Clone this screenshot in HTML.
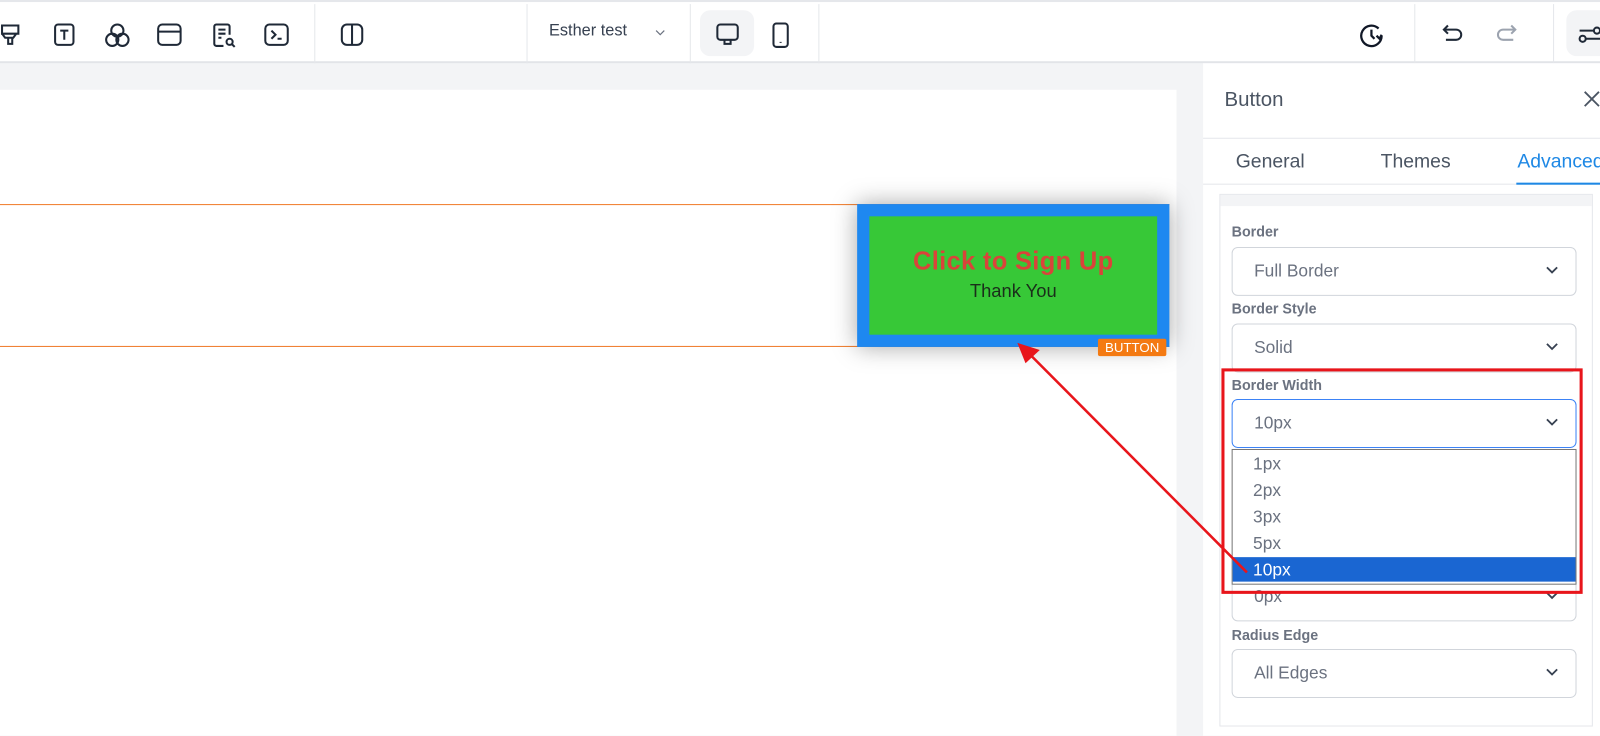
<!DOCTYPE html>
<html><head><meta charset="utf-8"><style>
*{box-sizing:border-box;margin:0;padding:0}
html,body{width:1600px;height:736px;overflow:hidden;background:#f3f4f6}
#w{position:absolute;left:0;top:0;width:1568px;height:721px;transform:scale(1.020408);transform-origin:0 0;overflow:hidden;font-family:"Liberation Sans",sans-serif;background:#f3f4f6}
.a{position:absolute}
.top{left:0;top:0;width:1568px;height:62px;background:#fff;border-top:2px solid #e5e7eb;border-bottom:2px solid #e2e4e8}
.vd{position:absolute;top:2px;width:1px;height:58px;background:#e5e7eb}
.ic{position:absolute;top:20px}
.lbl{position:absolute;left:1207px;font-size:14px;color:#6b7280;font-weight:bold}
.sel{position:absolute;left:1207px;width:338px;height:48px;border:1px solid #d1d5db;border-radius:6px;background:#fff;font-size:17px;color:#6b7280;padding-left:21px;line-height:46px}
.chev{position:absolute;right:16px;top:17px}
.opt{position:absolute;left:1228px;font-size:17px;color:#6b7280}
</style></head><body><div id="w">
<div class="a top">
<svg class="ic" style="left:0" width="22" height="24" viewBox="0 0 22 24" fill="none" stroke="#1f2937" stroke-width="2"><path d="M2 3h16v8H2zM2 11l3 4h8l3-4M8 15v6h4v-6"/></svg>
<svg class="ic" style="left:51px" width="24" height="24" viewBox="0 0 24 24" fill="none" stroke="#1f2937" stroke-width="2" ><rect x="3" y="2" width="18" height="20" rx="3"/><path d="M8 8h8M12 8v9"/></svg>
<svg class="ic" style="left:102px" width="26" height="26" viewBox="0 0 26 26" fill="none" stroke="#1f2937" stroke-width="2"><circle cx="13" cy="8" r="6"/><circle cx="8" cy="17" r="6"/><circle cx="18" cy="17" r="6"/></svg>
<svg class="ic" style="left:153px" width="26" height="24" viewBox="0 0 26 24" fill="none" stroke="#1f2937" stroke-width="2"><rect x="2" y="2" width="22" height="20" rx="4"/><path d="M2 9h22"/></svg>
<svg class="ic" style="left:207px" width="26" height="26" viewBox="0 0 26 26" fill="none" stroke="#1f2937" stroke-width="2"><path d="M12 23H5a2 2 0 0 1-2-2V4a2 2 0 0 1 2-2h11a2 2 0 0 1 2 2v8M7 7h7M7 11h7M7 15h3"/><circle cx="18" cy="19" r="3"/><path d="M20 21l3 3"/></svg>
<svg class="ic" style="left:258px" width="26" height="24" viewBox="0 0 26 24" fill="none" stroke="#1f2937" stroke-width="2"><rect x="2" y="2" width="22" height="20" rx="4"/><path d="M8 8l4 4-4 4M14 16h4"/></svg>
<div class="vd" style="left:308px"></div>
<svg class="ic" style="left:333px" width="24" height="24" viewBox="0 0 24 24" fill="none" stroke="#1f2937" stroke-width="2"><rect x="2" y="2" width="20" height="20" rx="5"/><path d="M12 2v20"/></svg>
<div class="vd" style="left:516px"></div>
<div class="a" style="left:538px;top:20px;font-size:16px;color:#374151">Esther test</div>
<svg class="a" style="left:641px;top:26px" width="12" height="8" viewBox="0 0 12 8" fill="none" stroke="#6b7280" stroke-width="1.2"><path d="M2 2l4 4 4-4"/></svg>
<div class="vd" style="left:676px"></div>
<div class="a" style="left:686px;top:8px;width:53px;height:45px;background:#f3f4f6;border-radius:10px"></div>
<svg class="ic" style="left:701px" width="24" height="24" viewBox="0 0 24 24" fill="none" stroke="#1f2937" stroke-width="2"><rect x="2" y="2" width="20" height="15" rx="3"/><path d="M9 17v4h6v-4"/></svg>
<svg class="ic" style="left:756px" width="18" height="26" viewBox="0 0 18 26" fill="none" stroke="#1f2937" stroke-width="2"><rect x="2" y="1" width="14" height="23" rx="3"/><path d="M9 19v1"/></svg>
<div class="vd" style="left:802px"></div>
<svg class="ic" style="left:1332px" width="26" height="26" viewBox="0 0 26 26" fill="none" stroke="#111827" stroke-width="2.2"><path d="M22 13a10 10 0 1 1-3-7"/><path d="M12 7v6l3 3M22 12l-2 4-3-3"/></svg>
<div class="vd" style="left:1386px"></div>
<svg class="ic" style="left:1412px" width="24" height="24" viewBox="0 0 24 24" fill="none" stroke="#1f2937" stroke-width="2"><path d="M7 3L3 7l4 4M3 7h12a5 5 0 0 1 0 10H5"/></svg>
<svg class="ic" style="left:1464px" width="24" height="24" viewBox="0 0 24 24" fill="none" stroke="#9ca3af" stroke-width="2"><path d="M17 3l4 4-4 4M21 7H9a5 5 0 0 0 0 10h10"/></svg>
<div class="vd" style="left:1522px"></div>
<div class="a" style="left:1535px;top:8px;width:80px;height:45px;background:#f3f4f6;border-radius:10px"></div>
<svg class="ic" style="left:1546px" width="24" height="24" viewBox="0 0 24 24" fill="none" stroke="#1f2937" stroke-width="2"><path d="M2 8h14M8 16h16"/><circle cx="19" cy="8" r="3"/><circle cx="5" cy="16" r="3"/></svg>
</div>
<div class="a" style="left:0;top:88px;width:1153px;height:648px;background:#fff"></div>
<div class="a" style="left:0;top:200px;width:1146px;height:1px;background:#f07b2a"></div>
<div class="a" style="left:0;top:339px;width:1146px;height:1px;background:#f07b2a"></div>
<div class="a" style="left:840px;top:200px;width:306px;height:140px;background:#1e88f0;box-shadow:0 0 22px rgba(0,0,0,.35)"></div>
<div class="a" style="left:852px;top:212px;width:282px;height:116px;background:#37c837;text-align:center">
<div style="margin-top:30px;font-size:25px;font-weight:bold;color:#d9443a;letter-spacing:.3px">Click to Sign Up</div>
<div style="margin-top:4px;font-size:18px;color:#1a2e1a">Thank You</div></div>
<div class="a" style="left:1076px;top:332px;width:67px;height:17px;background:#f47a12;color:#fff;font-size:13px;line-height:17px;text-align:center;border-radius:2px">BUTTON</div>
<div class="a" style="left:1179px;top:62px;width:421px;height:674px;background:#fff"></div>
<div class="a" style="left:1200px;top:87px;font-size:20px;color:#4b5563">Button</div>
<svg class="a" style="left:1551px;top:88px" width="18" height="18" viewBox="0 0 18 18" stroke="#4b5563" stroke-width="1.8"><path d="M2 2l14 14M16 2L2 16"/></svg>
<div class="a" style="left:1179px;top:135px;width:421px;height:1px;background:#e5e7eb"></div>
<div class="a" style="left:1211px;top:148px;font-size:19px;color:#4b5563">General</div>
<div class="a" style="left:1353px;top:148px;font-size:19px;color:#4b5563">Themes</div>
<div class="a" style="left:1487px;top:148px;font-size:19px;color:#1e88e5">Advanced</div>
<div class="a" style="left:1179px;top:180px;width:421px;height:1px;background:#e5e7eb"></div>
<div class="a" style="left:1486px;top:179px;width:114px;height:2px;background:#1e88e5"></div>
<div class="a" style="left:1195px;top:190px;width:366px;height:522px;border:1px solid #e5e7eb;background:#fff"></div>
<div class="a" style="left:1196px;top:191px;width:364px;height:11px;background:#f3f4f6"></div>
<div class="lbl" style="top:219px">Border</div>
<div class="sel" style="top:242px">Full Border<svg class="chev" width="14" height="10" viewBox="0 0 14 10" fill="none" stroke="#374151" stroke-width="1.8"><path d="M2 2l5 5 5-5"/></svg></div>
<div class="lbl" style="top:294px">Border Style</div>
<div class="sel" style="top:317px">Solid<svg class="chev" width="14" height="10" viewBox="0 0 14 10" fill="none" stroke="#374151" stroke-width="1.8"><path d="M2 2l5 5 5-5"/></svg></div>
<div class="lbl" style="top:369px">Border Width</div>
<div class="sel" style="top:391px;border-color:#3b82f6;border-width:1.5px">10px<svg class="chev" width="14" height="10" viewBox="0 0 14 10" fill="none" stroke="#374151" stroke-width="1.8"><path d="M2 2l5 5 5-5"/></svg></div>
<div class="sel" style="top:561px">0px<svg class="chev" width="14" height="10" viewBox="0 0 14 10" fill="none" stroke="#374151" stroke-width="1.8"><path d="M2 2l5 5 5-5"/></svg></div>
<div class="a" style="left:1207px;top:440px;width:338px;height:133px;background:#fff;border:1px solid #777"></div>
<div class="opt" style="top:445px">1px</div>
<div class="opt" style="top:471px">2px</div>
<div class="opt" style="top:497px">3px</div>
<div class="opt" style="top:523px">5px</div>
<div class="a" style="left:1208px;top:546px;width:336px;height:24px;background:#1a66d2"></div>
<div class="opt" style="top:549px;color:#fff">10px</div>
<div class="lbl" style="top:614px">Radius Edge</div>
<div class="sel" style="top:636px">All Edges<svg class="chev" width="14" height="10" viewBox="0 0 14 10" fill="none" stroke="#374151" stroke-width="1.8"><path d="M2 2l5 5 5-5"/></svg></div>
<div class="a" style="left:1197px;top:361px;width:354px;height:221px;border:3px solid #e8151b"></div>
<svg class="a" style="left:0;top:0" width="1600" height="736"><line x1="1222" y1="561" x2="1010" y2="348" stroke="#e8151b" stroke-width="2.5"/><polygon points="997,336 1019,343 1005,356" fill="#e8151b"/></svg>
</div></body></html>
